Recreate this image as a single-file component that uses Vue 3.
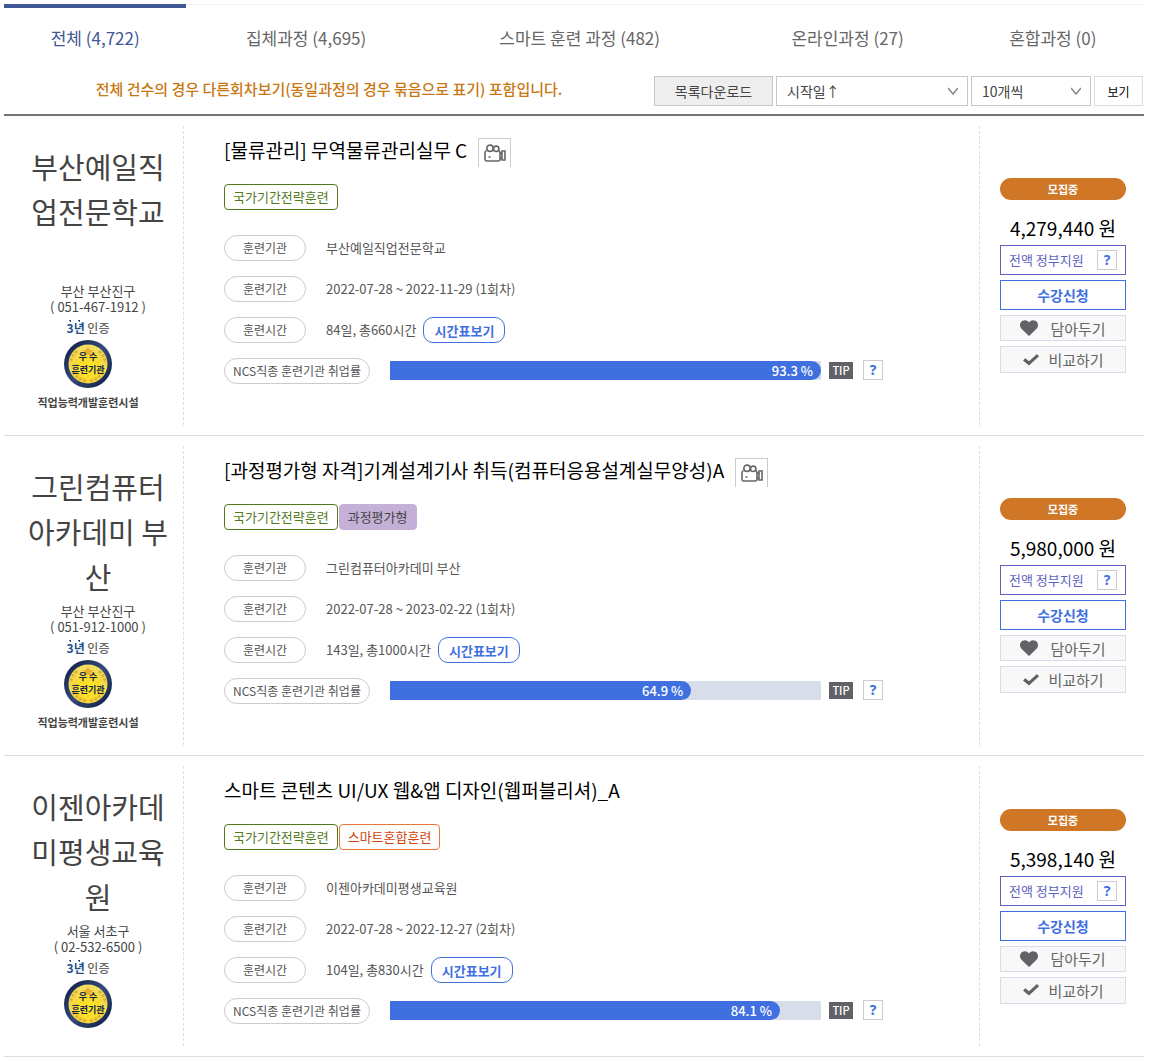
<script setup>
import { ref } from 'vue'

const tabs = [
  { label: '전체', count: '4,722' },
  { label: '집체과정', count: '4,695' },
  { label: '스마트 훈련 과정', count: '482' },
  { label: '온라인과정', count: '27' },
  { label: '혼합과정', count: '0' },
]
const activeTab = ref(0)
const sort = ref('start')
const pageSize = ref('10')

const courses = [
  {
    school: '부산예일직업전문학교',
    region: '부산 부산진구',
    phone: '051-467-1912',
    facility: true,
    title: '[물류관리] 무역물류관리실무 C',
    video: true,
    tags: [{ text: '국가기간전략훈련', kind: 'green' }],
    period: '2022-07-28 ~ 2022-11-29 (1회차)',
    hours: '84일, 총660시간',
    rate: 93.3,
    fill: 100,
    price: '4,279,440',
  },
  {
    school: '그린컴퓨터아카데미 부산',
    region: '부산 부산진구',
    phone: '051-912-1000',
    facility: true,
    title: '[과정평가형 자격]기계설계기사 취득(컴퓨터응용설계실무양성)A',
    video: true,
    tags: [
      { text: '국가기간전략훈련', kind: 'green' },
      { text: '과정평가형', kind: 'purple' },
    ],
    period: '2022-07-28 ~ 2023-02-22 (1회차)',
    hours: '143일, 총1000시간',
    rate: 64.9,
    fill: 69.9,
    price: '5,980,000',
  },
  {
    school: '이젠아카데미평생교육원',
    region: '서울 서초구',
    phone: '02-532-6500',
    facility: false,
    title: '스마트 콘텐츠 UI/UX 웹&앱 디자인(웹퍼블리셔)_A',
    video: false,
    tags: [
      { text: '국가기간전략훈련', kind: 'green' },
      { text: '스마트혼합훈련', kind: 'orange' },
    ],
    period: '2022-07-28 ~ 2022-12-27 (2회차)',
    hours: '104일, 총830시간',
    rate: 84.1,
    fill: 90.5,
    price: '5,398,140',
  },
]
</script>

<template>
  <main class="page">
    <nav class="tabs">
      <a
        v-for="(tab, i) in tabs"
        :key="tab.label"
        href="#"
        class="tab"
        :class="{ active: i === activeTab }"
        @click.prevent="activeTab = i"
      >{{ tab.label }} ({{ tab.count }})</a>
    </nav>

    <div class="toolbar">
      <p class="notice">전체 건수의 경우 다른회차보기(동일과정의 경우 묶음으로 표기) 포함입니다.</p>
      <div class="controls">
        <button type="button" class="download">목록다운로드</button>
        <div class="select sort">
          <select v-model="sort" aria-label="정렬">
            <option value="start">시작일↑</option>
          </select>
          <svg viewBox="0 0 10 8" aria-hidden="true"><path d="M0 1 5 7 10 1" /></svg>
        </div>
        <div class="select size">
          <select v-model="pageSize" aria-label="목록 개수">
            <option value="10">10개씩</option>
          </select>
          <svg viewBox="0 0 10 8" aria-hidden="true"><path d="M0 1 5 7 10 1" /></svg>
        </div>
        <button type="button" class="view">보기</button>
      </div>
    </div>

    <article v-for="course in courses" :key="course.title" class="card">
      <div class="school">
        <h3 class="school-name">{{ course.school }}</h3>
        <p class="contact">{{ course.region }}<br>( {{ course.phone }} )</p>
        <div class="cert">
          <p class="cert-years"><b><span class="dotted">3</span><span class="dotted">년</span></b> 인증</p>
          <svg class="medal" viewBox="0 0 48 48" role="img" aria-label="우수 훈련기관">
            <defs>
              <radialGradient id="gold" cx="50%" cy="60%" r="55%">
                <stop offset="0" stop-color="#ffe91d" />
                <stop offset="0.6" stop-color="#f8d931" />
                <stop offset="1" stop-color="#f3dc63" />
              </radialGradient>
              <linearGradient id="rim" x1="0" y1="0" x2="1" y2="1">
                <stop offset="0" stop-color="#0c1c42" />
                <stop offset="0.5" stop-color="#344a78" />
                <stop offset="1" stop-color="#0c1c42" />
              </linearGradient>
            </defs>
            <circle cx="24" cy="24" r="24" fill="url(#rim)" />
            <circle cx="24" cy="24" r="19.5" fill="url(#gold)" />
            <path d="M24 6.5l1.5 3.3 3.5.4-2.6 2.4.7 3.5-3.1-1.8-3.1 1.8.7-3.5-2.6-2.4 3.5-.4z" fill="#e3ae2b" />
            <path
              d="M13 11q-6 5-6.500 12M35 11q6 5 6.500 12M9 32q4 7 13 9M39 32q-4 7-13 9"
              fill="none" stroke="#dba83a" stroke-width="3" stroke-dasharray="3 1.500" opacity=".8"
            />
            <text x="24" y="20" class="medal-text">우 수</text>
            <text x="24" y="33" class="medal-text">훈련기관</text>
          </svg>
          <p v-if="course.facility" class="facility">직업능력개발훈련시설</p>
        </div>
      </div>

      <div class="detail">
        <div class="heading">
          <h2 class="title">{{ course.title }}</h2>
          <button v-if="course.video" type="button" class="video" aria-label="동영상">
            <svg viewBox="0 0 22 18" aria-hidden="true">
              <path d="M2.500 6.500Q1 7 1 9v6q0 2 2 2h11q2 0 2-2V9q0-2-1.500-2.500" />
              <circle cx="6" cy="4.300" r="3.200" />
              <circle cx="12.200" cy="4.800" r="2.700" />
              <path d="M16 9.500 18 8.500M16 14l2 1M18 7h3v9h-3z" />
              <path d="M4.500 13h2" />
            </svg>
          </button>
        </div>
        <div class="tags">
          <span v-for="tag in course.tags" :key="tag.text" class="tag" :class="tag.kind">{{ tag.text }}</span>
        </div>
        <dl class="facts">
          <div class="fact"><dt>훈련기관</dt><dd>{{ course.school }}</dd></div>
          <div class="fact"><dt>훈련기간</dt><dd>{{ course.period }}</dd></div>
          <div class="fact">
            <dt>훈련시간</dt>
            <dd>{{ course.hours }}<button type="button" class="timetable">시간표보기</button></dd>
          </div>
          <div class="fact">
            <dt class="wide">NCS직종 훈련기관 취업률</dt>
            <dd class="rate">
              <div class="bar"><div class="fill" :style="{ width: course.fill + '%' }">{{ course.rate }} %</div></div>
              <span class="tip">TIP</span>
              <button type="button" class="help" aria-label="취업률 도움말">?</button>
            </dd>
          </div>
        </dl>
      </div>

      <div class="apply">
        <span class="status">모집중</span>
        <p class="price">{{ course.price }} 원</p>
        <div class="support">
          <span>전액 정부지원</span>
          <button type="button" class="help" aria-label="정부지원 도움말">?</button>
        </div>
        <button type="button" class="enroll">수강신청</button>
        <button type="button" class="action">
          <svg class="heart" viewBox="0 0 18 16" aria-hidden="true">
            <path d="M9 16 1.200 8.600C-.8 6.400-.2 2.600 2.200 1.100 4.500-.4 7.400.3 9 2.400 10.600.3 13.500-.4 15.800 1.100c2.400 1.500 3 5.300 1 7.500z" />
          </svg>
          담아두기
        </button>
        <button type="button" class="action compare">
          <svg class="check" viewBox="0 0 18 14" aria-hidden="true">
            <path d="M1 7.500 3.300 5.200 7 8.300 15 1 17 3.300 7 12.500z" />
          </svg>
          비교하기
        </button>
      </div>
    </article>
  </main>
</template>

<style>
body {
  margin: 0;
  background: #fff;
}
</style>

<style scoped>
.page {
  padding: 4px 6px 0 4px;
  font-family: "Noto Sans CJK KR", "Noto Sans CJK SC", "Noto Sans CJK JP", sans-serif;
  font-size: 13px;
  line-height: 16px;
  color: #555;
}
.page * {
  box-sizing: border-box;
}
h2, h3, p, dl, dd {
  margin: 0;
  font-weight: 400;
}
button, select {
  font-family: inherit;
  margin: 0;
  padding: 0;
  border-radius: 0;
  cursor: pointer;
}

.tabs {
  display: grid;
  grid-template-columns: 16% 21% 27% 20% 16%;
}
.tab {
  height: 72px;
  padding-top: 21px;
  border-top: 1px solid #f3f3f3;
  text-align: center;
  text-decoration: none;
  font-size: 17px;
  line-height: 24px;
  color: #666;
}
.tab.active {
  padding-top: 18px;
  border-top: 4px solid #3f5795;
  color: #3f5795;
}

.toolbar {
  display: flex;
  padding-bottom: 8px;
  border-bottom: 2px solid #757579;
}
.notice {
  flex: 1;
  padding-top: 1px;
  text-align: center;
  font-size: 15px;
  font-weight: 500;
  line-height: 24px;
  color: #c77812;
}
.controls {
  display: flex;
  gap: 3px;
  padding-right: 1px;
}
.controls button,
.select select {
  height: 30px;
  border: 1px solid #c8c8cb;
  font-size: 14px;
  color: #444;
}
.controls .download {
  width: 119px;
  background: #eee;
}
.controls .view {
  width: 49px;
  border-color: #ddd;
  background: #fff;
  font-size: 12px;
  color: #000;
}
.select {
  position: relative;
}
.sort {
  width: 192px;
}
.size {
  width: 120px;
}
.select select {
  width: 100%;
  padding: 0 30px 0 10px;
  appearance: none;
  background: #fff;
}
.select svg {
  position: absolute;
  top: 11px;
  right: 10px;
  width: 10px;
  height: 8px;
  fill: none;
  stroke: #888;
  stroke-width: 1.5;
  pointer-events: none;
}

.card {
  display: flex;
  padding: 10px 0;
  border-bottom: 1px solid #ddd;
}
.school {
  width: 179px;
  padding: 18px 9px 18px 18px;
  text-align: center;
  color: #444;
}
.school-name {
  min-height: 135px;
  font-size: 29px;
  line-height: 45px;
  word-break: break-all;
}
.contact {
  padding-top: 4px;
}
.cert {
  padding: 5px 20px 0 0;
}
.cert-years {
  margin-bottom: 4px;
  font-size: 12px;
  font-weight: 500;
  color: #666;
}
.cert-years b {
  color: #1d4f8c;
}
.dotted {
  background: radial-gradient(circle, #1d4f8c 1px, transparent 1px) center top / 3px 3px no-repeat;
}
.medal {
  display: block;
  width: 48px;
  height: 48px;
  margin: 0 auto;
}
.medal-text {
  font-size: 9px;
  font-weight: 700;
  text-anchor: middle;
  fill: #14244c;
}
.facility {
  padding-top: 9px;
  font-size: 11px;
  font-weight: 700;
  line-height: 10px;
  white-space: nowrap;
}

.detail {
  flex: 1;
  padding: 12px 96px 0 40px;
  border-left: 1px dashed #ddd;
  border-right: 1px dashed #ddd;
}
.heading {
  display: flex;
  gap: 11px;
  min-height: 29px;
}
.title {
  font-size: 19px;
  line-height: 24px;
  color: #000;
}
.video {
  width: 33px;
  height: 29px;
  border: 1px solid #ccc;
  border-bottom: 0;
  background: #fff;
}
.video svg {
  display: block;
  width: 22px;
  height: 18px;
  margin: 0 auto;
  fill: none;
  stroke: #666;
  stroke-width: 1.6;
}
.tags {
  display: flex;
  gap: 1px;
  margin-top: 17px;
}
.tag {
  padding: 0 8px;
  border: 1px solid;
  border-radius: 4px;
  line-height: 24px;
}
.green {
  border-color: #56781d;
  color: #56781d;
}
.purple {
  border-color: #c5b0d8;
  background: #c5b0d8;
  color: #444;
}
.orange {
  border-color: #e87636;
  color: #d0430c;
}
.facts {
  display: flex;
  flex-direction: column;
  gap: 15px;
  margin-top: 25px;
}
.fact {
  display: flex;
  gap: 20px;
}
.fact dt {
  width: 82px;
  border: 1px solid #ccc;
  border-radius: 13px;
  text-align: center;
  font-size: 12px;
  line-height: 24px;
}
.fact .wide {
  width: 146px;
}
.fact dd {
  display: flex;
  align-items: center;
  height: 26px;
}
.timetable {
  width: 82px;
  height: 26px;
  margin-left: 7px;
  border: 1px solid #4070df;
  border-radius: 10px;
  background: #fff;
  font-size: 13px;
  font-weight: 700;
  color: #4070df;
}
.fact .rate {
  flex: 1;
  height: 24px;
}
.bar {
  flex: 1;
  background: #d7deea;
}
.fill {
  padding-right: 8px;
  border-radius: 0 10px 10px 0;
  background: #4070df;
  text-align: right;
  font-weight: 500;
  line-height: 19px;
  color: #fff;
}
.tip {
  width: 24px;
  margin: 0 10px 0 8px;
  background: #626167;
  text-align: center;
  font-size: 11px;
  font-weight: 500;
  line-height: 17px;
  color: #fff;
}
.help {
  width: 20px;
  height: 20px;
  border: 1px solid #ccc;
  background: #fff;
  font-family: "Noto Sans", sans-serif;
  font-size: 14px;
  font-weight: 700;
  line-height: 18px;
  color: #4070df;
}

.apply {
  display: flex;
  flex-direction: column;
  justify-content: center;
  gap: 5px;
  width: 164px;
  padding: 0 18px 0 20px;
}
.status {
  border-radius: 11px;
  background: #cf7727;
  text-align: center;
  font-size: 11px;
  font-weight: 700;
  line-height: 22px;
  color: #fff;
}
.price {
  padding-top: 11px;
  text-align: center;
  font-size: 19px;
  line-height: 24px;
  white-space: nowrap;
  color: #000;
}
.support,
.enroll {
  height: 30px;
  border: 1px solid #6062bf;
  background: #fff;
}
.support {
  display: flex;
  align-items: center;
  justify-content: space-between;
  padding: 0 8px;
  line-height: 14px;
  color: #6062bf;
}
.enroll {
  border-color: #4070df;
  font-size: 14px;
  font-weight: 700;
  color: #4070df;
}
.action {
  display: flex;
  align-items: center;
  justify-content: center;
  gap: 12px;
  height: 26px;
  border: 1px solid #d8dcea;
  background: #f8f8f8;
  font-size: 15px;
  color: #666;
}
.compare {
  gap: 8px;
  height: 27px;
}
.action svg {
  width: 18px;
  fill: #626167;
}
.heart {
  height: 16px;
}
.check {
  height: 14px;
}
</style>
